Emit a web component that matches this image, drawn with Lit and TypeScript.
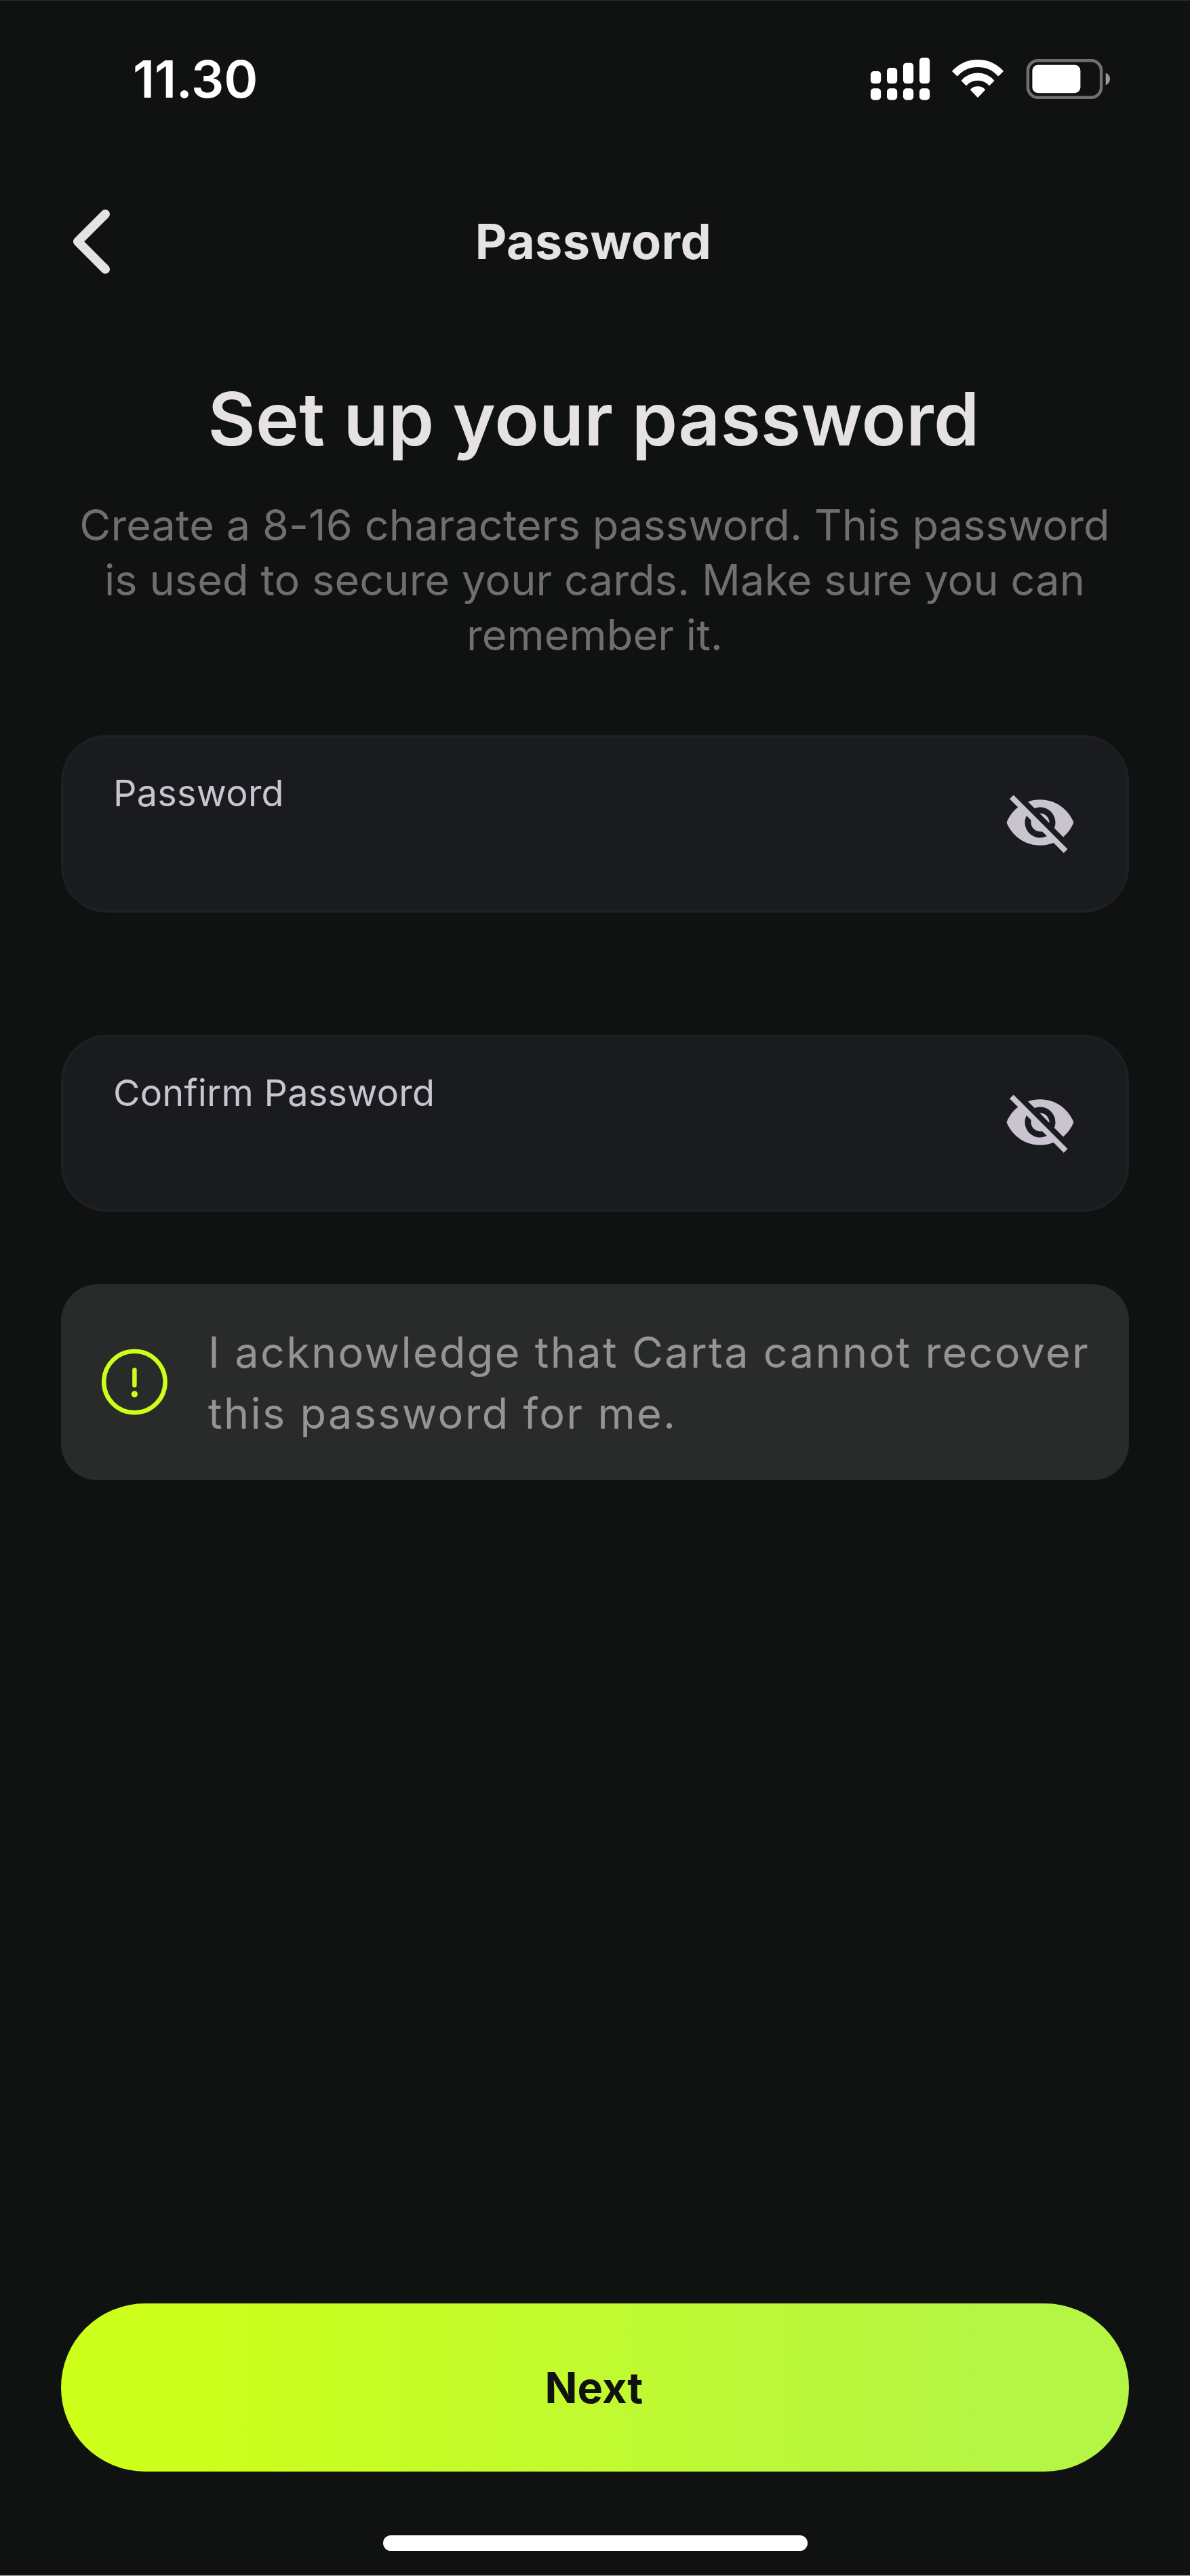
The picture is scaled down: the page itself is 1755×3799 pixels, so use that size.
import { LitElement, html, css, svg } from "lit";
import { customElement, property } from "lit/decorators.js";

@customElement("status-bar")
class StatusBar extends LitElement {
  static styles = css`
    :host { display: flex; align-items: center; justify-content: space-between; height: 233px; padding: 0 116px 0 196px; color: #fff; }
    .time { padding-bottom: 3px; font-size: 76px; font-weight: 600; line-height: 92px; letter-spacing: -0.2px; }
    .icons { display: flex; align-items: center; padding-bottom: 1px; }
    .signal { margin-right: 31px; }
    .wifi { margin-right: 32px; }
    svg { display: block; }
  `;

  render() {
    const tops = [20, 15, 7.7, 0];
    return html`
      <div class="time">11.30</div>
      <div class="icons">
        <svg class="signal" width="88" height="64" viewBox="0 0 88 64" fill="#fff">
          ${tops.map((top, i) => svg`
            <rect x=${i * 24} y=${top} width="15.2" height=${38.3 - top} rx="4.8"></rect>
            <rect x=${i * 24} y="45.2" width="15.2" height="17.2" rx="5"></rect>`)}
        </svg>
        <svg class="wifi" width="78" height="64" viewBox="-39 85 78 64" fill="#fff" stroke="#fff" stroke-width="1.6" stroke-linejoin="round">
          <path d="M-37 105A50.2 50.2 0 0 1 37 105L30.3 111.5A41 41 0 0 0-30.3 111.5Z"></path>
          <path d="M-23.5 119A31 31 0 0 1 23.5 119L17 125.4A23 23 0 0 0-17 125.4Z"></path>
          <path d="M-10.2 132.2A14.5 14.5 0 0 1 10.2 132.2L0 143Z"></path>
        </svg>
        <svg class="battery" width="126" height="64" viewBox="0 0 126 64">
          <rect x="2.9" y="4.3" width="108.2" height="54.5" rx="15" fill="none" stroke="#707070" stroke-width="4.5"></rect>
          <rect x="9.4" y="10.8" width="71" height="41.5" rx="8.5" fill="#fff"></rect>
          <path d="M117.7 22.5C121.5 24 124 27.5 124 31.5S121.5 39 117.7 40.5Z" fill="#999"></path>
        </svg>
      </div>
    `;
  }
}

@customElement("password-field")
class PasswordField extends LitElement {
  @property() label = "";

  static styles = css`
    :host { display: flex; align-items: center; justify-content: space-between; box-sizing: border-box; height: 261.5px; padding: 0 73.3px 0 73px; border: 4.5px solid #1e1f23; border-radius: 68px; background: #1a1b1f; }
    .text { align-self: flex-start; padding-top: 49px; font-size: 54px; line-height: 66px; letter-spacing: 0.25px; color: #cac4d0; }
    .eye { display: block; width: 108px; height: 108px; margin-bottom: 3px; fill: #cac4d0; }
  `;

  render() {
    return html`
      <div class="text">${this.label}</div>
      <svg class="eye" viewBox="0 0 24 24">
        <path d="M12 7c2.76 0 5 2.24 5 5 0 .65-.13 1.26-.36 1.83l2.92 2.92c1.51-1.26 2.7-2.89 3.43-4.75-1.73-4.39-6-7.5-11-7.5-1.4 0-2.74.25-3.98.7l2.16 2.16C10.74 7.13 11.35 7 12 7zM2 4.27l2.28 2.28.46.46C3.08 8.3 1.78 10.02 1 12c1.73 4.39 6 7.5 11 7.5 1.55 0 3.03-.3 4.38-.84l.42.42L19.73 22 21 20.73 3.27 3 2 4.27zM7.53 9.8l1.55 1.55c-.05.21-.08.43-.08.65 0 1.66 1.34 3 3 3 .22 0 .44-.03.65-.08l1.55 1.55c-.67.33-1.41.53-2.2.53-2.76 0-5-2.24-5-5 0-.79.2-1.53.53-2.2zm4.31-.78l3.15 3.15.02-.16c0-1.66-1.34-3-3-3l-.17.01z"></path>
      </svg>
    `;
  }
}

@customElement("app-root")
class AppRoot extends LitElement {
  static styles = css`
    :host { display: flex; flex-direction: column; box-sizing: border-box; width: 1755px; height: 3799px; border-top: 1px solid #2a2c2c; border-bottom: 1px solid #b5b5b5; background: #101211; font-family: Inter, "Liberation Sans", sans-serif; color: #e6e1e5; }
    .header { display: grid; grid-template-columns: 1fr auto 1fr; align-items: center; height: 244px; padding: 0 90px; }
    .back { display: block; width: 108px; height: 108px; }
    .title { padding-right: 5px; font-size: 72px; font-weight: 700; line-height: 88px; letter-spacing: 0.35px; }
    .content { display: flex; flex-direction: column; flex: 1; padding: 75px 90px 0; }
    .heading { margin: 0; padding-right: 4px; font-size: 108px; font-weight: 600; line-height: 130px; text-align: center; letter-spacing: 0.12px; }
    .lead { margin: 51px 0 107px; padding-right: 1px; font-size: 63px; line-height: 81px; letter-spacing: 0.08px; text-align: center; color: #6f6f6f; }
    .lead-line { display: block; white-space: nowrap; }
    .fields { display: flex; flex-direction: column; gap: 180px; }
    .notice { display: flex; align-items: center; box-sizing: border-box; height: 288.5px; margin-top: 107px; padding: 0 54px; border-radius: 54px; background: #292a2a; }
    .alert { display: block; flex: none; width: 108px; height: 108px; margin-right: 55px; }
    .notice-text { padding-top: 2px; font-size: 63px; line-height: 90px; letter-spacing: 2.3px; color: #979395; white-space: nowrap; }
    .next { height: 248px; margin-top: auto; padding: 0 3px 0 0; border: 0; border-radius: 124px; background: linear-gradient(90deg, #ccff1a 12%, #b5f544 88%); font-family: inherit; font-size: 63px; font-weight: 700; line-height: 76px; color: #101211; }
    .home { align-self: center; width: 626px; height: 23px; margin: 94px 0 36px; border-radius: 12px; background: #fff; }
  `;

  render() {
    return html`
      <status-bar></status-bar>
      <div class="header">
        <svg class="back" viewBox="0 0 108 108" fill="none" stroke="#e6e1e5" stroke-width="13.5" stroke-linecap="round" stroke-linejoin="round">
          <path d="M65.3 13.7L24.7 54.3L65.3 95"></path>
        </svg>
        <div class="title">Password</div>
      </div>
      <div class="content">
        <h1 class="heading">Set up your password</h1>
        <p class="lead">
          <span class="lead-line">Create a 8-16 characters password. This password</span>
          <span class="lead-line">is used to secure your cards. Make sure you can</span>
          <span class="lead-line">remember it.</span>
        </p>
        <div class="fields">
          <password-field label="Password"></password-field>
          <password-field label="Confirm Password"></password-field>
        </div>
        <div class="notice">
          <svg class="alert" viewBox="0 0 108 108">
            <circle cx="54.4" cy="54" r="45.2" fill="none" stroke="#ccff1a" stroke-width="6.5"></circle>
            <path d="M54.4 36.2V58.9" stroke="#ccff1a" stroke-width="6.5" stroke-linecap="round"></path>
            <circle cx="54.4" cy="72" r="4.7" fill="#ccff1a"></circle>
          </svg>
          <div class="notice-text">I acknowledge that Carta cannot recover<br>this password for me.</div>
        </div>
        <button class="next">Next</button>
      </div>
      <div class="home"></div>
    `;
  }
}
